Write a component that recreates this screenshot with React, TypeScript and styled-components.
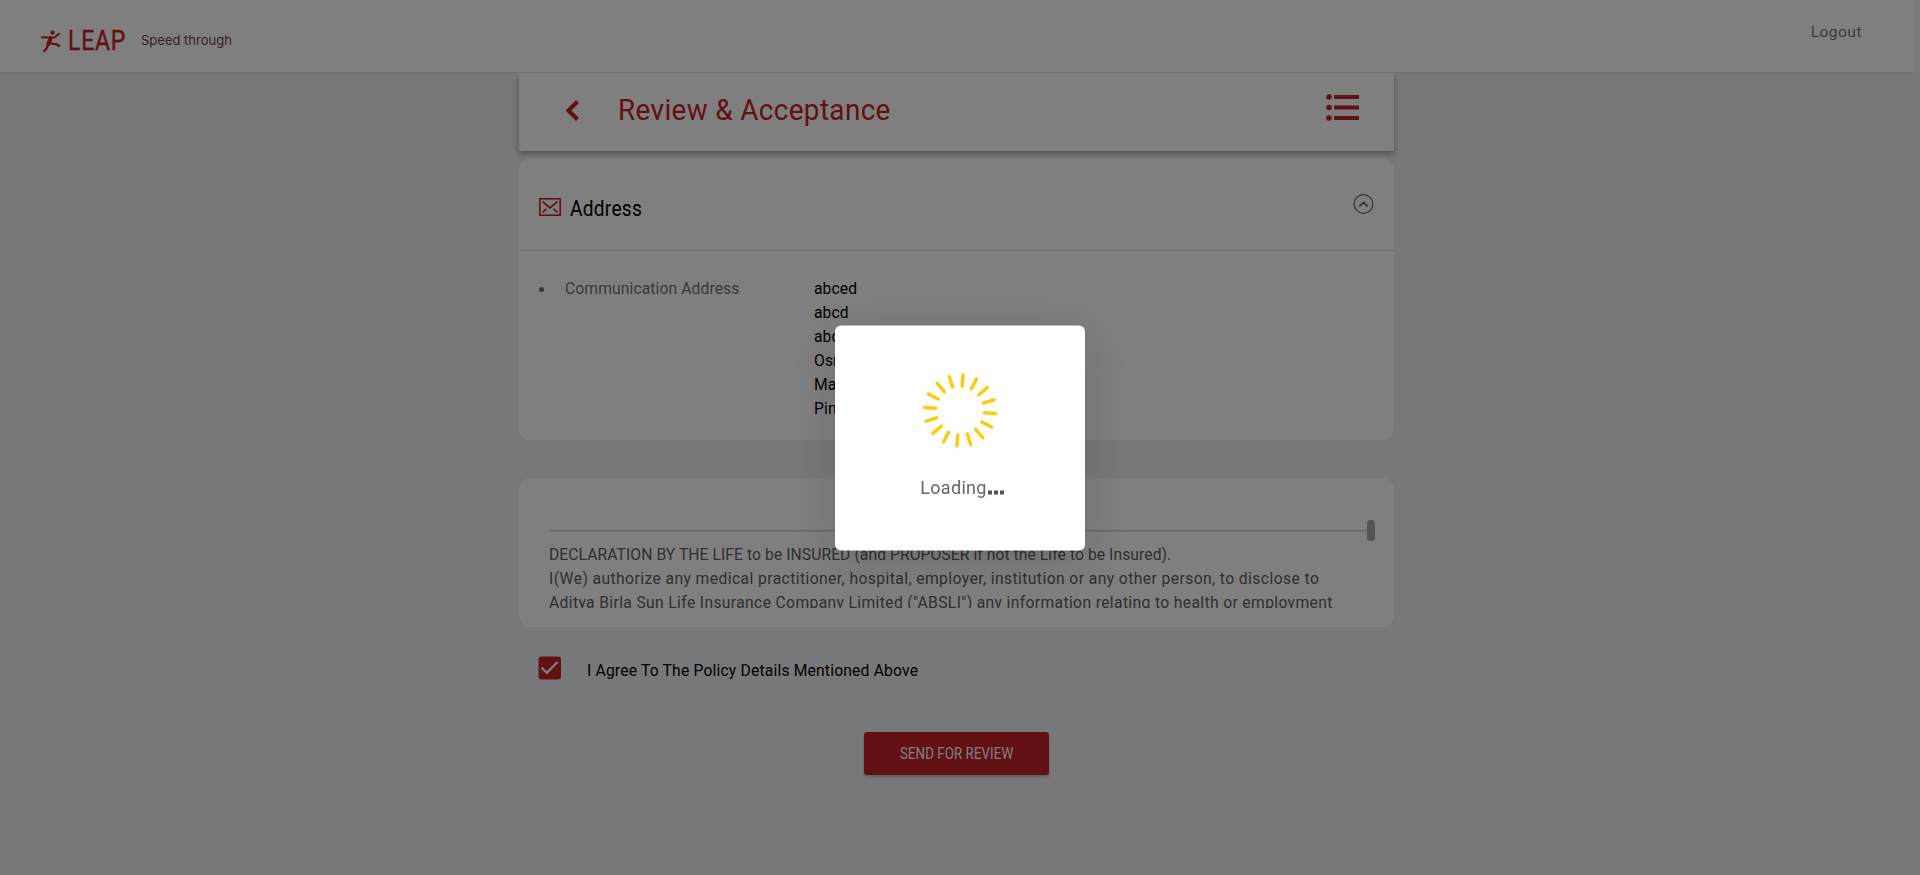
import React from 'react';
import styled, { createGlobalStyle } from 'styled-components';

const RED = '#c62128';

const GlobalStyle = createGlobalStyle`
  * { box-sizing: border-box; }
  html, body { margin: 0; padding: 0; overflow: hidden; }
  body { background: #eff1f4; font-family: Roboto, sans-serif; color: #000; }
`;

const Page = styled.div`
  height: 875px;
  display: flex;
  flex-direction: column;
`;

const TopBar = styled.div`
  flex: none;
  display: flex;
  height: 73px;
  background: #f4f4f4;
`;

const Header = styled.header`
  width: 1913px;
  display: flex;
  align-items: flex-start;
  background: #fff;
  border-bottom: 1px solid #dfe0e2;
  padding: 0 51px 0 40px;
`;

const Brand = styled.div`
  display: flex;
  align-items: flex-start;
  flex: 1;
  svg { display: block; margin-top: 30px; }
`;

/* Narrow lettering: squeezes the glyphs sideways and adjusts the tracking. */
const Narrow = styled.span<{ $scale?: number; $track?: number }>`
  display: inline-block;
  white-space: nowrap;
  transform: scaleX(${p => p.$scale ?? 0.95});
  transform-origin: 0 50%;
  letter-spacing: ${p => p.$track ?? 0.1}px;
`;

const BrandName = styled.div`
  width: 73px;
  margin: 24px 0 0 6px;
  font-size: 28.5px;
  line-height: 33px;
  color: ${RED};
  -webkit-text-stroke: 0.4px ${RED};
`;

const Tagline = styled.div`
  margin-top: 32px;
  font: 400 13px/16px Inter, sans-serif;
  color: #6d4048;
`;

const Logout = styled.a`
  margin-top: 23px;
  font-size: 15.5px;
  line-height: 18px;
  letter-spacing: 0.5px;
  color: #777;
`;

const Content = styled.main`
  width: 875px;
  margin-left: 519px;
  display: flex;
  flex-direction: column;
`;

const TitleBar = styled.section`
  height: 78px;
  background: #fff;
  display: flex;
  align-items: flex-start;
  padding: 0 35px 0 46px;
  box-shadow: 0 3px 6px rgba(80, 85, 90, 0.5);
  clip-path: inset(0 -12px -12px -12px);
  svg { display: block; }
`;

const BackIcon = styled.svg`margin-top: 26px;`;
const ListIcon = styled.svg`margin-top: 20px;`;

const Title = styled.h1`
  flex: 1;
  margin: 18px 0 0 38px;
  font-size: 30px;
  line-height: 38px;
  font-weight: 400;
  color: ${RED};
`;

const Card = styled.section<{ $height: number; $top: number }>`
  height: ${p => p.$height}px;
  margin-top: ${p => p.$top}px;
  background: #fff;
  border-radius: 12px;
`;

const CardHead = styled.div`
  height: 93px;
  display: flex;
  border-bottom: 1px solid #dcdddf;
  padding: 36px 20px 0;
`;

const EnvelopeIcon = styled.svg`margin-top: 4px;`;

const CardTitle = styled.h2`
  flex: 1;
  margin: 2px 0 0 9px;
  font-size: 22px;
  line-height: 26px;
  font-weight: 400;
`;

const Details = styled.div`
  display: flex;
  padding: 26px 20px 0;
  font-size: 16.5px;
  line-height: 24px;
`;

const Bullet = styled.i`
  width: 5px;
  height: 5px;
  margin: 10px 21px 0 0;
  border-radius: 50%;
  background: #707070;
`;

const Label = styled.div`
  width: 249px;
  color: #707070;
`;

const Value = styled.div`
  display: flex;
  flex-direction: column;
`;

const Declaration = styled.div`
  padding: 42px 19px 0 30px;
`;

const RuleRow = styled.div`
  display: flex;
  align-items: center;
  height: 21px;
`;

const Rule = styled.div`
  flex: 1;
  height: 2px;
  border-top: 1px solid #ccc;
  background: #eaeaea;
`;

const Thumb = styled.div`
  width: 8px;
  height: 21px;
  border-radius: 3px;
  background: #a8a8a8;
`;

const DeclarationText = styled.div`
  height: 67px;
  padding-top: 2px;
  overflow: hidden;
  font-size: 16.5px;
  line-height: 24px;
  color: #5e5e5e;
  display: flex;
  flex-direction: column;
  align-items: flex-start;
`;

const Agreement = styled.label`
  display: flex;
  margin: 28px 0 0 19px;
  font-size: 16.5px;
  line-height: 24px;
  span { margin-top: 4px; }
  svg { margin: 1px 25px 0 0; flex: none; }
`;

const SendButton = styled.button`
  width: 185px;
  height: 43px;
  margin: 49px 0 0 345px;
  padding: 0 0 0 36px;
  border: 0;
  border-radius: 3px;
  background: ${RED};
  box-shadow: 0 2px 3px rgba(0, 0, 0, 0.22);
  color: #fff;
  text-align: left;
  font: 400 16px/20px Roboto, sans-serif;
`;

const Backdrop = styled.div`
  position: fixed;
  inset: 0;
  display: flex;
  align-items: center;
  justify-content: center;
  background: rgba(0, 0, 0, 0.5);
`;

const Dialog = styled.div`
  width: 250px;
  height: 225px;
  transform: translateY(0.5px);
  display: flex;
  flex-direction: column;
  align-items: center;
  padding-top: 45px;
  background: #fff;
  border-radius: 6px;
  box-shadow: 0 11px 15px -7px rgba(0, 0, 0, 0.06), 0 9px 46px 8px rgba(0, 0, 0, 0.1);
`;

const LoadingText = styled.div`
  display: flex;
  align-items: flex-end;
  margin: 26px 0 0 4px;
  font-size: 18px;
  line-height: 22px;
  letter-spacing: 0.3px;
  color: #666;
`;

const Dots = styled.span`
  display: flex;
  gap: 2px;
  margin: 0 0 4px 1px;
  i { width: 4px; height: 4px; background: #555; }
`;

const Runner = () => (
  <svg width="22" height="24" viewBox="0 0 22 24" fill="none" stroke={RED} strokeLinecap="round" strokeLinejoin="round">
    <circle cx="12.6" cy="2.7" r="2.1" fill={RED} stroke="none" />
    <path d="M2 7.2L10.5 7.8L14.5 7.5L19 3.8" strokeWidth="2" />
    <path d="M10.8 8L8.3 14" strokeWidth="4" />
    <path d="M8.2 14L6.8 18L4.3 21" strokeWidth="2.3" />
    <path d="M9 13.2L13.5 13.8Q18 14 19 16" strokeWidth="2.3" />
  </svg>
);

const Spinner = () => (
  <svg width="80" height="80" viewBox="-40 -40 80 80" stroke="#ffcb0c" strokeWidth="3.4" strokeLinecap="round">
    {Array.from({ length: 16 }, (_, i) => (
      <line key={i} x1="0.4" y1="-35.6" x2="0.4" y2="-24.5" transform={`rotate(${4.3 + i * 22.5})`} />
    ))}
  </svg>
);

const address = ['abced', 'abcd', 'abcd', 'Osmanabad', 'Maharashtra', 'Pincode'];

const declaration = [
  { text: 'DECLARATION BY THE LIFE to be INSURED (and PROPOSER if not the Life to be Insured).', track: 0.07 },
  { text: 'I(We) authorize any medical practitioner, hospital, employer, institution or any other person, to disclose to', track: 0.43 },
  { text: 'Aditya Birla Sun Life Insurance Company Limited ("ABSLI") any information relating to health or employment', track: 0.37 },
];

export default function App() {
  return (
    <>
      <GlobalStyle />
      <Page>
        <TopBar>
          <Header>
            <Brand>
              <Runner />
              <BrandName><Narrow $scale={0.81} $track={0.9}>LEAP</Narrow></BrandName>
              <Tagline>Speed through</Tagline>
            </Brand>
            <Logout>Logout</Logout>
          </Header>
        </TopBar>
        <Content>
          <TitleBar>
            <BackIcon width="15" height="23" viewBox="0 0 15 23" fill="none" stroke={RED} strokeWidth="4.2">
              <path d="M12.5 2.5L3.5 11.5L12.5 20.5" />
            </BackIcon>
            <Title><Narrow $scale={0.93} $track={0.38}>Review &amp; Acceptance</Narrow></Title>
            <ListIcon width="34" height="30" viewBox="0 0 34 30" fill={RED}>
              {[4, 14.5, 25].map(y => (
                <g key={y}>
                  <circle cx="4" cy={y} r="2.8" />
                  <rect x="9" y={y - 2} width="25" height="4" rx="0.5" />
                </g>
              ))}
            </ListIcon>
          </TitleBar>

          <Card $height={282} $top={7}>
            <CardHead>
              <EnvelopeIcon width="22" height="18" viewBox="0 0 22 18" fill="none" stroke={RED} strokeWidth="1.7">
                <rect x="0.75" y="0.75" width="20.5" height="16.5" />
                <path d="M3.5 3.5L11 10L18.5 3.5M3.5 14.5L7.5 10.8M18.5 14.5L14.5 10.8" />
              </EnvelopeIcon>
              <CardTitle><Narrow $scale={0.87} $track={0.3}>Address</Narrow></CardTitle>
              <svg width="22" height="22" viewBox="0 0 22 22" fill="none" stroke="#666" strokeWidth="1.2">
                <circle cx="11.5" cy="10" r="9.4" />
                <path d="M7.3 12.4L11.5 8.4L15.7 12.4" strokeWidth="1.8" />
              </svg>
            </CardHead>
            <Details>
              <Bullet />
              <Label><Narrow>Communication Address</Narrow></Label>
              <Value>
                {address.map((line, i) => <Narrow key={i}>{line}</Narrow>)}
              </Value>
            </Details>
          </Card>

          <Card $height={149} $top={38}>
            <Declaration>
              <RuleRow><Rule /><Thumb /></RuleRow>
              <DeclarationText>
                {declaration.map(line => (
                  <Narrow key={line.text} $track={line.track}>{line.text}</Narrow>
                ))}
              </DeclarationText>
            </Declaration>
          </Card>

          <Agreement>
            <svg width="24" height="24" viewBox="0 0 24 24" fill="none">
              <rect x="0.5" y="0.5" width="22.5" height="23" rx="3" fill={RED} />
              <path d="M3.5 11.5L8.8 16.8L19.5 6" stroke="#fff" strokeWidth="2.3" />
            </svg>
            <Narrow $track={0.18}>I Agree To The Policy Details Mentioned Above</Narrow>
          </Agreement>

          <SendButton><Narrow $scale={0.83} $track={0.1}>SEND FOR REVIEW</Narrow></SendButton>
        </Content>
      </Page>
      <Backdrop>
        <Dialog>
          <Spinner />
          <LoadingText>Loading<Dots><i /><i /><i /></Dots></LoadingText>
        </Dialog>
      </Backdrop>
    </>
  );
}
